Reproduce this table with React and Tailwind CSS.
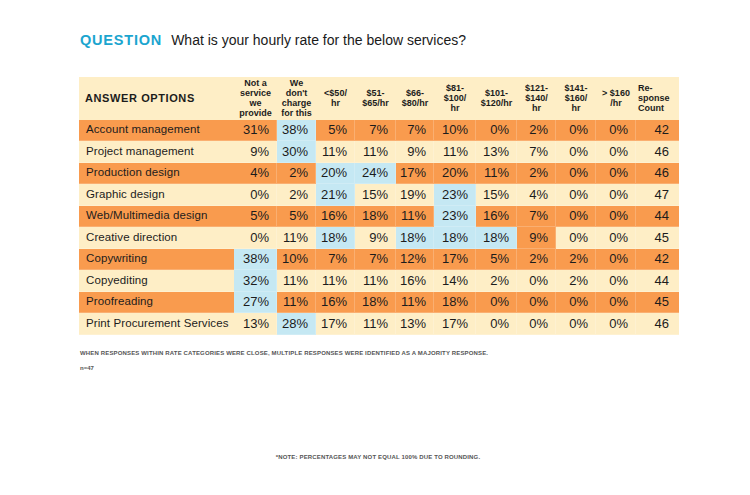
import React from 'react';

// Column headers (line breaks as in the printed survey)
const columns = [
  ['Not a', 'service', 'we', 'provide'],
  ['We', "don't", 'charge', 'for this'],
  ['<$50/', 'hr'],
  ['$51-', '$65/hr'],
  ['$66-', '$80/hr'],
  ['$81-', '$100/', 'hr'],
  ['$101-', '$120/hr'],
  ['$121-', '$140/', 'hr'],
  ['$141-', '$160/', 'hr'],
  ['> $160', '/hr'],
];

// b = blue majority cell, o = orange cell on a cream row
const rows = [
  { label: 'Account management', values: ['31%', '38%', '5%', '7%', '7%', '10%', '0%', '2%', '0%', '0%'], count: 42, hl: { 1: 'b' } },
  { label: 'Project management', values: ['9%', '30%', '11%', '11%', '9%', '11%', '13%', '7%', '0%', '0%'], count: 46, hl: { 1: 'b' } },
  { label: 'Production design', values: ['4%', '2%', '20%', '24%', '17%', '20%', '11%', '2%', '0%', '0%'], count: 46, hl: { 2: 'b', 3: 'b' } },
  { label: 'Graphic design', values: ['0%', '2%', '21%', '15%', '19%', '23%', '15%', '4%', '0%', '0%'], count: 47, hl: { 2: 'b', 5: 'b' } },
  { label: 'Web/Multimedia design', values: ['5%', '5%', '16%', '18%', '11%', '23%', '16%', '7%', '0%', '0%'], count: 44, hl: { 5: 'b' } },
  { label: 'Creative direction', values: ['0%', '11%', '18%', '9%', '18%', '18%', '18%', '9%', '0%', '0%'], count: 45, hl: { 2: 'b', 4: 'b', 5: 'b', 6: 'b', 7: 'o' } },
  { label: 'Copywriting', values: ['38%', '10%', '7%', '7%', '12%', '17%', '5%', '2%', '2%', '0%'], count: 42, hl: { 0: 'b' } },
  { label: 'Copyediting', values: ['32%', '11%', '11%', '11%', '16%', '14%', '2%', '0%', '2%', '0%'], count: 44, hl: { 0: 'b' } },
  { label: 'Proofreading', values: ['27%', '11%', '16%', '18%', '11%', '18%', '0%', '0%', '0%', '0%'], count: 45, hl: { 0: 'b' } },
  { label: 'Print Procurement Services', values: ['13%', '28%', '17%', '11%', '13%', '17%', '0%', '0%', '0%', '0%'], count: 46, hl: { 1: 'b' } },
];

const cellBg = (rowIndex, mark) => {
  if (mark === 'b') return 'bg-[#c5e8f3]';
  if (mark === 'o') return 'bg-[#f99b4e]';
  return rowIndex % 2 === 0 ? 'bg-[#f99b4e]' : 'bg-[#feeec6]';
};

const App = () => {
  return (
    <div
      className="w-[750px] h-[495px] bg-white text-[#1c1c1c] flex flex-col"
      style={{ fontFamily: '"Liberation Sans", Arial, sans-serif' }}
    >
      <div className="pl-[80px] pt-[30px] flex items-baseline gap-[9px]">
        <span className="text-[#1ba5cf] text-[14.5px] font-bold tracking-[0.8px]">QUESTION</span>
        <span className="text-[14px] text-[#1a1a1a]">What is your hourly rate for the below services?</span>
      </div>

      <div className="ml-[79px] mt-[25px] w-[600px] grid grid-cols-[155px_43px_39px_39px_41px_38px_42px_41px_39px_40px_40px_43px]">
        {/* header row */}
        <div className="h-[43px] bg-[#feeec6] flex items-center pl-[6px] text-[11px] font-bold tracking-[0.6px]">
          ANSWER OPTIONS
        </div>
        {columns.map((lines, i) => (
          <div
            key={i}
            className="h-[43px] bg-[#feeec6] flex flex-col items-center justify-center text-[9px] leading-[10px] font-bold text-center"
          >
            {lines.map((l, j) => (
              <span key={j}>{l}</span>
            ))}
          </div>
        ))}
        <div className="h-[43px] bg-[#feeec6] flex flex-col justify-center pl-[2px] text-[9px] leading-[10px] font-bold">
          <span>Re-</span>
          <span>sponse</span>
          <span>Count</span>
        </div>

        {/* body rows */}
        {rows.map((row, r) => (
          <React.Fragment key={row.label}>
            <div className={`h-[21.5px] flex items-center pl-[7px] text-[11.5px] tracking-[0.1px] whitespace-nowrap border-b border-white/20 ${cellBg(r)}`}>
              {row.label}
            </div>
            {row.values.map((v, c) => (
              <div
                key={c}
                className={`h-[21.5px] flex items-center justify-end pr-[7px] text-[13px] border-b border-r border-white/20 ${cellBg(r, row.hl[c])}`}
              >
                {v}
              </div>
            ))}
            <div className={`h-[21.5px] flex items-center justify-end pr-[10px] text-[13px] border-b border-white/20 ${cellBg(r)}`}>
              {row.count}
            </div>
          </React.Fragment>
        ))}
      </div>

      <div className="pl-[80px] mt-[14px] text-[6px] font-bold tracking-[0.15px] text-[#555]">
        WHEN RESPONSES WITHIN RATE CATEGORIES WERE CLOSE, MULTIPLE RESPONSES WERE IDENTIFIED AS A MAJORITY RESPONSE.
      </div>
      <div className="pl-[80px] mt-[6px] text-[6px] font-bold text-[#555]">n=47</div>

      <div className="mt-[80px] text-center pl-[6px] text-[6px] font-bold tracking-[0.15px] text-[#555]">
        *NOTE: PERCENTAGES MAY NOT EQUAL 100% DUE TO ROUNDING.
      </div>
    </div>
  );
};

export default App;
